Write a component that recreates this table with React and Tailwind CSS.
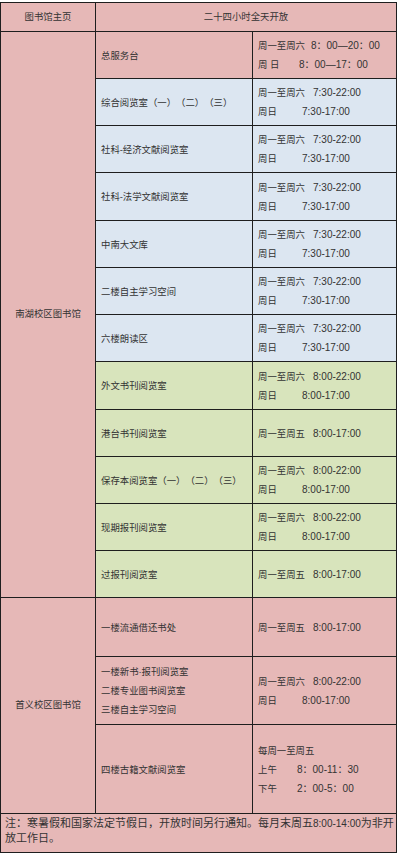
const PINK = "bg-[#e6b8b7]";
const BLUE = "bg-[#dce6f1]";
const GREEN = "bg-[#d8e4bc]";

// each entry: name lines, time lines [label, value, labelWidth], bg
const nanhu = [
  { name: ["总服务台"], bg: PINK, times: [["周一至周六", "8：00—20：00", "w-[53px]"], ["周 日", "8：00—17：00", "w-[41px]"]] },
  { name: ["综合阅览室（一）（二）（三）"], bg: BLUE, times: [["周一至周六", "7:30-22:00", "w-[55px]"], ["周日", "7:30-17:00", "w-[44px]"]] },
  { name: ["社科-经济文献阅览室"], bg: BLUE, times: [["周一至周六", "7:30-22:00", "w-[55px]"], ["周日", "7:30-17:00", "w-[44px]"]] },
  { name: ["社科-法学文献阅览室"], bg: BLUE, times: [["周一至周六", "7:30-22:00", "w-[55px]"], ["周日", "7:30-17:00", "w-[44px]"]] },
  { name: ["中南大文库"], bg: BLUE, times: [["周一至周六", "7:30-22:00", "w-[55px]"], ["周日", "7:30-17:00", "w-[44px]"]] },
  { name: ["二楼自主学习空间"], bg: BLUE, times: [["周一至周六", "7:30-22:00", "w-[55px]"], ["周日", "7:30-17:00", "w-[44px]"]] },
  { name: ["六楼朗读区"], bg: BLUE, times: [["周一至周六", "7:30-22:00", "w-[55px]"], ["周日", "7:30-17:00", "w-[44px]"]] },
  { name: ["外文书刊阅览室"], bg: GREEN, times: [["周一至周六", "8:00-22:00", "w-[55px]"], ["周日", "8:00-17:00", "w-[44px]"]] },
  { name: ["港台书刊阅览室"], bg: GREEN, times: [["周一至周五", "8:00-17:00", "w-[55px]"]] },
  { name: ["保存本阅览室（一）（二）（三）"], bg: GREEN, times: [["周一至周六", "8:00-22:00", "w-[55px]"], ["周日", "8:00-17:00", "w-[44px]"]] },
  { name: ["现期报刊阅览室"], bg: GREEN, times: [["周一至周六", "8:00-22:00", "w-[55px]"], ["周日", "8:00-17:00", "w-[44px]"]] },
  { name: ["过报刊阅览室"], bg: GREEN, times: [["周一至周五", "8:00-17:00", "w-[55px]"]] },
];

const shouyi = [
  { name: ["一楼流通借还书处"], bg: PINK, times: [["周一至周五", "8:00-17:00", "w-[55px]"]] },
  { name: ["一楼新书·报刊阅览室", "二楼专业图书阅览室", "三楼自主学习空间"], bg: PINK, times: [["周一至周六", "8:00-22:00", "w-[55px]"], ["周日", "8:00-17:00", "w-[44px]"]] },
  { name: ["四楼古籍文献阅览室"], bg: PINK, times: [["每周一至周五", "", ""], ["上午", "8：00-11：30", "w-[39px]"], ["下午", "2：00-5：00", "w-[39px]"]] },
];

function Row({ item }) {
  return (
    <>
      <div className={`${item.bg} flex flex-col justify-center pl-[5px]`}>
        {item.name.map((n) => (
          <div key={n} className="leading-[19px] whitespace-nowrap">{n}</div>
        ))}
      </div>
      <div className={`${item.bg} flex flex-col justify-center pl-[5px]`}>
        {item.times.map(([label, value, w]) => (
          <div key={label} className="flex items-baseline leading-[19px] whitespace-nowrap">
            <span className={w}>{label}</span>
            {value && <span className="text-[10px]">{value}</span>}
          </div>
        ))}
      </div>
    </>
  );
}

export default function App() {
  return (
    <div
      className="pt-[2px] bg-white text-[9.4px] text-[#333] [text-spacing-trim:space-all]"
      style={{ fontFamily: '"Liberation Sans", "Noto Sans CJK SC", sans-serif' }}
    >
      <div className="grid w-[397px] gap-px p-px bg-[#1e1e1e] grid-cols-[94px_156px_143px] grid-rows-[28px_46px_46px_46px_47px_46px_46px_46px_47px_46px_46px_46px_46px_58px_67px_88px_38px]">
        {/* header */}
        <div className={`${PINK} flex items-center justify-center`}>图书馆主页</div>
        <div className={`${PINK} col-span-2 flex items-center justify-center`}>二十四小时全天开放</div>

        {/* 南湖校区 */}
        <div className={`${PINK} row-span-12 flex items-center justify-center`}>南湖校区图书馆</div>
        {nanhu.map((item) => (
          <div key={item.name[0]} className="contents">
            <Row item={item} />
          </div>
        ))}

        {/* 首义校区 */}
        <div className={`${PINK} row-span-3 flex items-center justify-center`}>首义校区图书馆</div>
        {shouyi.map((item) => (
          <div key={item.name[0]} className="contents">
            <Row item={item} />
          </div>
        ))}

        {/* note */}
        <div className={`${PINK} col-span-3 pl-[4px] pt-[2px] text-[11px] leading-[15px] whitespace-nowrap`}>
          <div>
            注：寒暑假和国家法定节假日，开放时间另行通知。每月末周五<span className="text-[10px]">8:00-14:00</span>为非开
          </div>
          <div>放工作日。</div>
        </div>
      </div>
    </div>
  );
}
